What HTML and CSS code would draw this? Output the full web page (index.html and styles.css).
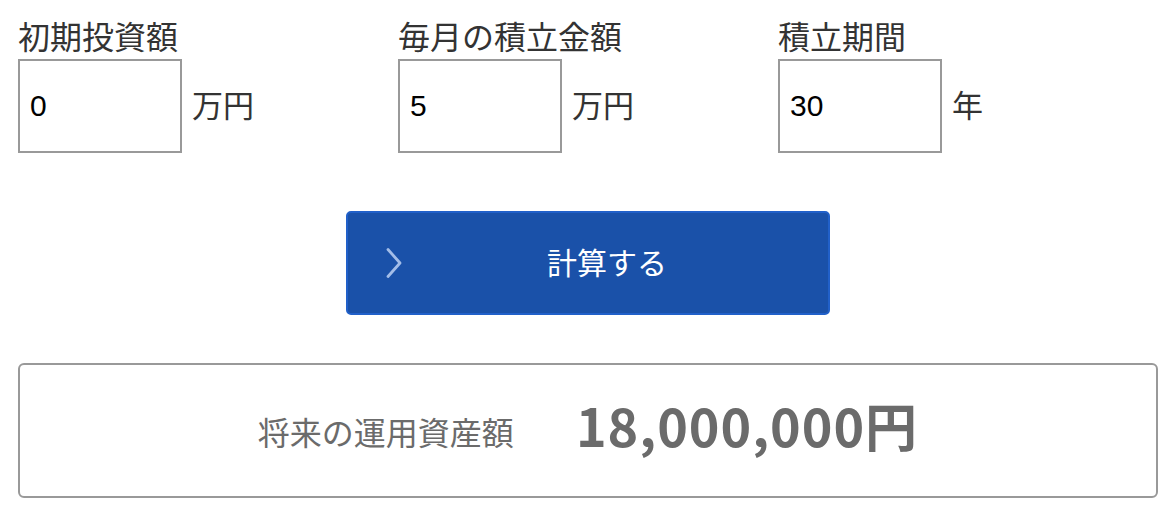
FILE: index.html
```html
<!DOCTYPE html>
<html lang="ja">
<head>
<meta charset="utf-8">
<link rel="stylesheet" href="styles.css">
</head>
<body>
<div class="page">
  <div class="fields">
    <div class="field">
      <div class="label">初期投資額</div>
      <div class="row">
        <input class="box" type="text" value="0">
        <span class="unit">万円</span>
      </div>
    </div>
    <div class="field">
      <div class="label">毎月の積立金額</div>
      <div class="row">
        <input class="box" type="text" value="5">
        <span class="unit">万円</span>
      </div>
    </div>
    <div class="field">
      <div class="label">積立期間</div>
      <div class="row">
        <input class="box" type="text" value="30">
        <span class="unit">年</span>
      </div>
    </div>
  </div>
  <div class="actions">
    <button class="calc" type="button">
      <svg class="chev" width="18" height="32" viewBox="0 0 18 32"><path d="M3 2.5 L15 16 L3 29.5" fill="none" stroke="#a3bde8" stroke-width="2.8" stroke-linecap="round" stroke-linejoin="round"/></svg>
      <span class="calc-text">計算する</span>
    </button>
  </div>
  <div class="result">
    <span class="result-label">将来の運用資産額</span>
    <span class="result-value">18,000,000円</span>
  </div>
</div>
</body>
</html>
```
FILE: styles.css
```css
* { box-sizing: border-box; }
html, body { margin: 0; padding: 0; background: #fff; }
body {
  font-family: "Noto Sans CJK JP", "Noto Sans", sans-serif;
  color: #333;
}
.page {
  width: 1168px;
  padding: 11px 10px 0 18px;
}
.fields {
  display: grid;
  grid-template-columns: 380px 380px 380px;
}
.label {
  font-size: 32px;
  line-height: 48px;
  color: #333;
}
.row {
  display: flex;
  align-items: center;
  height: 94px;
}
.box {
  width: 164px;
  height: 94px;
  border: 2px solid #999;
  border-radius: 0;
  padding: 0 0 0 10px;
  margin: 0;
  font-family: "Liberation Sans", Arial, sans-serif;
  font-size: 30px;
  color: #000;
  background: #fff;
  outline: none;
}
.unit {
  margin-left: 10px;
  font-size: 31px;
  line-height: 1;
  color: #333;
  padding-bottom: 6px;
}
.actions {
  display: flex;
  justify-content: center;
  margin-top: 58px;
}
.calc {
  position: relative;
  width: 484px;
  height: 104px;
  margin: 0;
  background: #1a51a9;
  border: 2px solid #2160c9;
  border-radius: 5px;
  color: #fff;
  font-family: "Noto Sans CJK JP", sans-serif;
  font-size: 30px;
  padding: 0 0 4px 38px;
  display: flex;
  align-items: center;
  justify-content: center;
  cursor: pointer;
}
.chev {
  position: absolute;
  left: 37px;
  top: 34px;
}
.result {
  margin-top: 48px;
  width: 1140px;
  height: 135px;
  border: 2px solid #999;
  border-radius: 6px;
  display: flex;
  align-items: center;
  justify-content: center;
  gap: 62px;
  color: #6b6b6b;
}
.result-label {
  font-size: 32px;
  color: #6b6b6b;
}
.result-value {
  font-size: 52px;
  font-weight: 600;
  line-height: 1.2;
  padding-bottom: 10px;
  color: #6b6b6b;
  letter-spacing: 1px;
}
```
